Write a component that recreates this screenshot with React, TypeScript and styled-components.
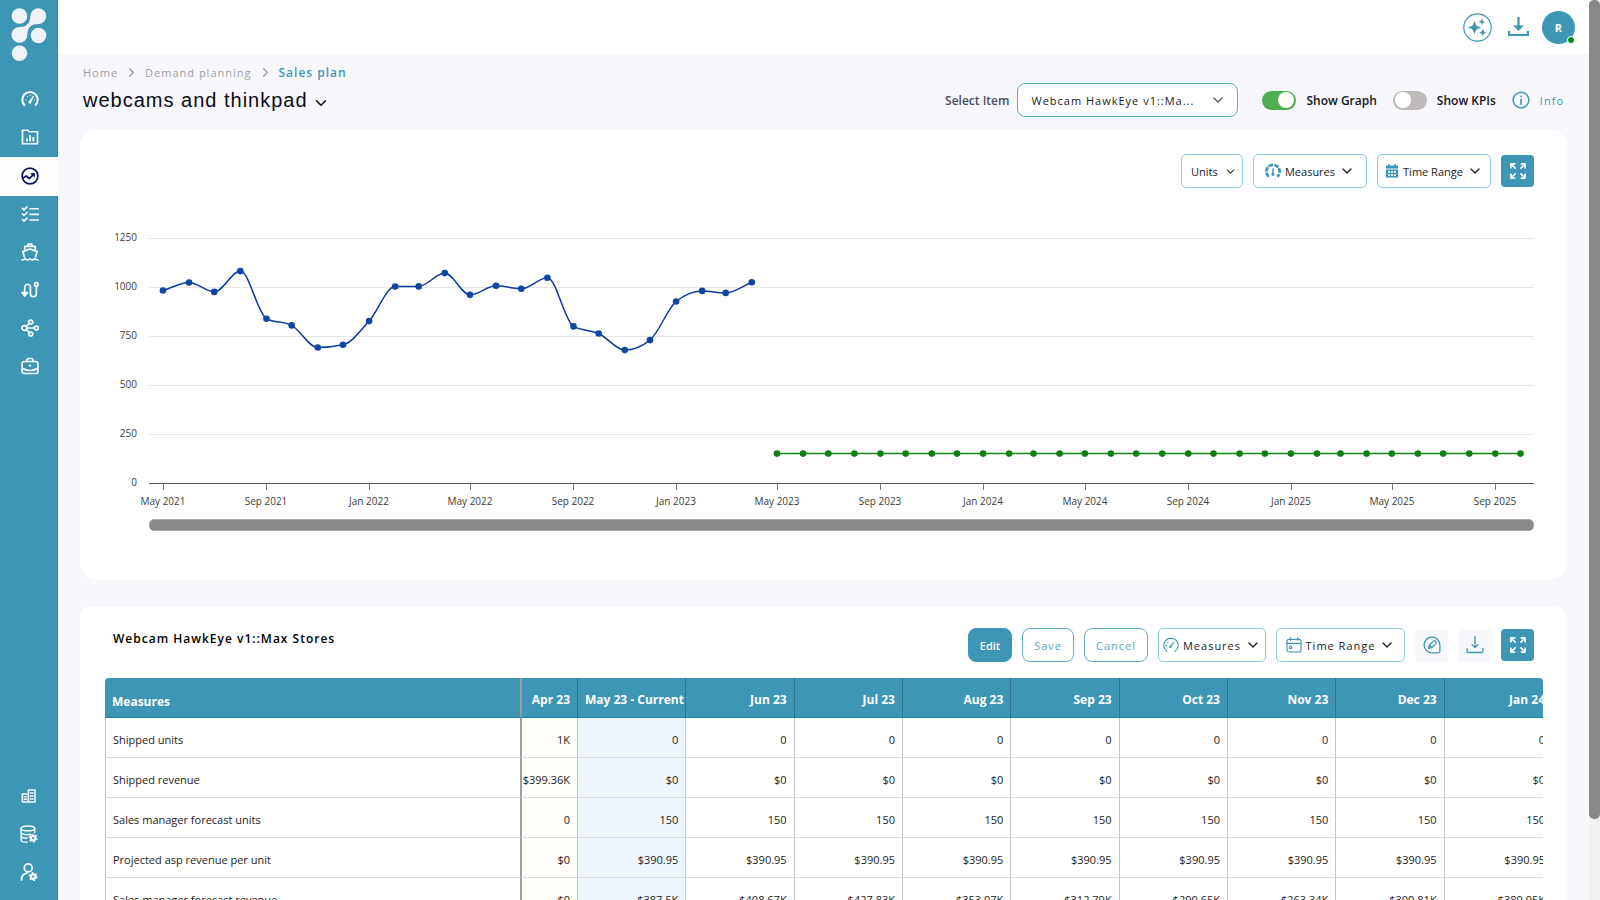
import React from "react";
import styled, { createGlobalStyle, css } from "styled-components";
import { ChevronDown, ChevronRight } from "lucide-react";

const teal = "#3e96b5";
const sans = `"Open Sans", "Noto Sans", sans-serif`;

const GlobalStyle = createGlobalStyle`
  * { box-sizing: border-box; }
  html, body { margin: 0; padding: 0; }
  body { font-family: ${sans}; font-size: 12px; color: #111; background: #f7f7fc; }
  button, input, select { font-family: inherit; }
`;

const Shell = styled.div`
  display: grid;
  grid-template-columns: 58px minmax(0, 1fr) 11px;
  height: 100vh;
  overflow: hidden;
`;

/* ---------- sidebar ---------- */

const Sidebar = styled.nav`
  display: flex;
  flex-direction: column;
  background: ${teal};
  box-shadow: inset -1px 0 #2b88ab;
  color: #f0f6fb;
`;

const Brand = styled.a`
  display: block;
  height: 81px;
  padding: 8px 0 0 11px;
`;

const NavLink = styled.a<{ $active?: boolean }>`
  display: flex;
  align-items: center;
  justify-content: center;
  height: ${(p) => (p.$active ? 39 : 38)}px;
  padding: 0 0 2px 1px;
  color: ${(p) => (p.$active ? "#0b1560" : "#f4f9fc")};
  background: ${(p) => (p.$active ? "#fdfdfe" : "transparent")};
`;

const NavGroup = styled.div<{ $bottom?: boolean }>`
  display: flex;
  flex-direction: column;
  ${(p) => p.$bottom && css`
    margin-top: auto;
    padding: 0 2px 8px 0;
  `}
`;

/* ---------- page ---------- */

const Page = styled.div`
  display: flex;
  flex-direction: column;
  min-width: 0;
  overflow: hidden;
`;

const TopBar = styled.header`
  display: flex;
  align-items: center;
  justify-content: flex-end;
  flex: none;
  gap: 13px;
  height: 54px;
  padding-right: 14px;
  background: #fff;
`;

const TopActions = styled.div`
  display: flex;
  align-items: center;
  gap: 16px;
`;

const BareButton = styled.button`
  display: flex;
  padding: 0;
  border: 0;
  background: none;
  color: ${teal};
`;

const Avatar = styled.button`
  position: relative;
  width: 33px;
  height: 33px;
  padding: 0;
  border: 0;
  border-radius: 50%;
  background: ${teal};
  color: #fff;
  font-size: 11px;
  font-weight: 700;
`;

const OnlineDot = styled.span`
  position: absolute;
  right: 0;
  bottom: 0;
  width: 8px;
  height: 8px;
  border: 1px solid #fff;
  border-radius: 50%;
  background: #0a8a0a;
`;

const Main = styled.main`
  display: flex;
  flex-direction: column;
  padding: 8px 22px 0;
`;

const Crumbs = styled.div`
  display: flex;
  align-items: center;
  gap: 6px;
  height: 20px;
  padding-left: 3px;
  color: #9a9aa2;
`;

const Crumb = styled.a<{ $current?: boolean }>`
  color: ${(p) => (p.$current ? teal : "#a0a0a6")};
  font-size: ${(p) => (p.$current ? 12 : 11)}px;
  font-weight: ${(p) => (p.$current ? 600 : 400)};
  letter-spacing: 1px;
  text-decoration: none;
`;

const TitleRow = styled.div`
  display: flex;
  align-items: center;
  justify-content: space-between;
  height: 34px;
  margin-top: 1px;
  padding: 0 3px;
`;

const TitleButton = styled.button`
  display: flex;
  align-items: center;
  gap: 4px;
  padding: 0;
  border: 0;
  background: none;
  color: #0a0a14;

  svg { margin-top: 5px; }
`;

const Title = styled.h1`
  margin: 0;
  font-family: "Liberation Sans", Arial, sans-serif;
  font-size: 20px;
  font-weight: 400;
  letter-spacing: 1px;
`;

const Controls = styled.div`
  display: flex;
  align-items: center;
  font-size: 12px;
  font-weight: 600;
`;

const FieldLabel = styled.label`
  margin-right: 8px;
  color: #4c4c5c;
`;

const SelectBox = styled.div<{ $wide?: boolean }>`
  display: grid;
  align-items: center;
  width: ${(p) => (p.$wide ? 221 : 62)}px;
  height: 34px;

  > * { grid-area: 1 / 1; }
  > svg { justify-self: end; margin-right: ${(p) => (p.$wide ? 12 : 6)}px; pointer-events: none; }
`;

const Select = styled.select<{ $wide?: boolean }>`
  appearance: none;
  width: 100%;
  height: 34px;
  padding: 0 ${(p) => (p.$wide ? 13 : 9)}px;
  border: 1px solid ${(p) => (p.$wide ? "#5fa9c4" : "#90cbe0")};
  border-radius: ${(p) => (p.$wide ? 8 : 5)}px;
  background: #fff;
  color: #222;
  font-size: 11px;
  letter-spacing: ${(p) => (p.$wide ? 1 : 0)}px;
`;

const Toggle = styled.label`
  display: flex;
  align-items: center;
  gap: 10px;
  margin-right: 16px;
  color: #14141c;
`;

const Switch = styled.input`
  appearance: none;
  display: flex;
  align-items: center;
  width: 34px;
  height: 19px;
  margin: 0;
  padding: 0 2px;
  border-radius: 10px;
  background: #bfbbbb;

  &::before {
    content: "";
    width: 16px;
    height: 16px;
    border-radius: 50%;
    background: #fff;
  }
  &:checked { justify-content: flex-end; background: #4caf50; }
`;

const Toggles = styled.div`
  display: flex;
  align-items: center;
  margin-left: 24px;
`;

const InfoLink = styled.a`
  display: flex;
  align-items: center;
  gap: 10px;
  color: ${teal};
  font-size: 11px;
  font-weight: 400;
  letter-spacing: 1px;
  text-decoration: none;
`;

/* ---------- cards ---------- */

const Card = styled.section<{ $radius: number }>`
  border-radius: ${(p) => p.$radius}px;
  background: #fff;
`;

const ChartCard = styled(Card)`
  margin-top: 12px;
  padding: 25px 24px 49px;
`;

const TableCard = styled(Card)`
  margin-top: 27px;
  padding: 21px 24px 40px 25px;
`;

const Toolbar = styled.div`
  display: flex;
  align-items: center;
  justify-content: flex-end;
  gap: 10px;
  padding-right: 9px;
`;

const TableHead = styled.div`
  display: flex;
  align-items: flex-start;
  justify-content: space-between;
  padding-left: 8px;
  margin-bottom: 16px;
`;

const CardTitle = styled.h2`
  margin: 0;
  font-size: 12px;
  line-height: 22px;
  font-weight: 600;
  letter-spacing: 1px;
  color: #000;
`;

const DropButton = styled.button<{ $w: number; $spaced?: boolean }>`
  display: flex;
  align-items: center;
  justify-content: center;
  gap: 4px;
  width: ${(p) => p.$w}px;
  height: 34px;
  padding: 0;
  border: 1px solid #90cbe0;
  border-radius: 5px;
  background: #fff;
  color: #1c1c24;
  font-size: 11px;
  letter-spacing: ${(p) => (p.$spaced ? 1 : 0)}px;
  white-space: nowrap;

  svg:first-child { color: ${teal}; }
`;

const TextButton = styled.button<{ $filled?: boolean }>`
  height: 34px;
  padding: 0 11px;
  border: 1px solid ${(p) => (p.$filled ? teal : "#62abc6")};
  border-radius: 8px;
  background: ${(p) => (p.$filled ? teal : "#fff")};
  color: ${(p) => (p.$filled ? "#fff" : "#5ba5c0")};
  font-size: 11px;
  font-weight: ${(p) => (p.$filled ? 600 : 400)};
  letter-spacing: ${(p) => (p.$filled ? 0 : 1)}px;
`;

const IconButton = styled.button<{ $filled?: boolean }>`
  display: flex;
  align-items: center;
  justify-content: center;
  width: 33px;
  height: ${(p) => (p.$filled ? 32 : 33)}px;
  padding: 0;
  border: 0;
  border-radius: 4px;
  background: ${(p) => (p.$filled ? teal : "#f7f7fc")};
  color: ${(p) => (p.$filled ? "#fff" : teal)};
`;

/* ---------- chart ---------- */

const ChartSvg = styled.svg`
  display: block;
  width: 100%;
  height: auto;
  margin-top: 37px;
  font-family: ${sans};
  font-size: 10px;
  fill: #3c3c3c;
`;

const ChartScroll = styled.div`
  height: 12px;
  margin: 4px 9px 0 45px;
  border: 1px solid #a8a8a8;
  border-radius: 5px;
  background: #888;
`;

/* ---------- table ---------- */

const TableClip = styled.div`
  border-radius: 4px 4px 0 0;
  overflow: hidden;
`;

const DataTable = styled.table`
  width: calc(100% + 10px);
  table-layout: fixed;
  border-collapse: separate;
  border-spacing: 0;
  font-size: 11px;
`;

const NameCol = styled.col`
  width: 417px;
`;
const PastCol = styled.col`
  width: 56px;
`;

const edge = css<{ $kind?: string }>`
  border-right: ${(p) => (p.$kind === "name" ? "2px solid #9c9c9c" : "1px solid #c4c6c8")};
`;

const HeadCell = styled.th<{ $kind?: string }>`
  height: 40px;
  padding: ${(p) => (p.$kind === "name" ? 7 : 4)}px 7px 0;
  ${edge}
  ${(p) => p.$kind !== "name" && css`border-right-color: #2f7791;`}
  border-bottom: 1px solid #1a83a8;
  background: ${teal};
  color: #fff;
  font-size: 12px;
  font-weight: 700;
  text-align: ${(p) => (p.$kind === "name" ? "left" : "right")};
  white-space: nowrap;
`;

const cellBg: Record<string, string> = { past: "#fffef8", current: "#eef8fc" };

const Cell = styled.td<{ $kind?: string }>`
  height: 40px;
  padding: 3px 7px 0;
  ${(p) => p.$kind === "past" && css`padding-left: 0;`}
  ${edge}
  ${(p) => p.$kind === "name" && css`border-left: 1px solid #c8c8c8;`}
  border-bottom: 1px solid #dcdcdc;
  background: ${(p) => cellBg[p.$kind ?? ""] ?? "#fff"};
  color: #1c1c1c;
  text-align: ${(p) => (p.$kind === "name" ? "left" : "right")};
  white-space: nowrap;
`;

const ScrollTrack = styled.div`
  background: #f1f1f1;
`;

const ScrollThumb = styled.div`
  height: 91%;
  border-radius: 5px;
  background: #888;
`;

/* ---------- icons ---------- */

type IconProps = { size?: number; w?: number; children?: React.ReactNode };
const Line = ({ size = 18, w = 2.3, children }: IconProps) => (
  <svg width={size} height={size} viewBox="0 0 24 24" fill="none" stroke="currentColor" strokeWidth={w} strokeLinecap="round" strokeLinejoin="round" aria-hidden="true">
    {children}
  </svg>
);

const Logo = () => (
  <svg width="36" height="54" viewBox="0 0 36 54" fill="#f0f2fa" aria-hidden="true">
    <circle cx="8.5" cy="8" r="7.8" />
    <circle cx="27.5" cy="27.5" r="7.8" />
    <circle cx="8.5" cy="45.3" r="7.8" />
    <path d="M27.3 0.2a7.9 7.9 0 1 1 0 15.8c-6 .3-10.500 2-11 10.800a7.900 7.900 0 1 1-7.900-7.800c6.500-.2 10.600-2.500 11-11a7.900 7.900 0 0 1 7.900-7.800z" />
  </svg>
);

const GaugeIcon = () => (
  <Line w={2.800}>
    <path d="M4.500 20A10.300 10.300 0 1 1 19.500 20" />
    <path d="M10.500 16.500 16.500 8.500l-4 9z" fill="currentColor" strokeWidth="1.500" />
    <path d="M6.500 13h.1M8.500 8.800h.1M12.500 7h.1M18 13h.1" strokeWidth="1.600" />
  </Line>
);
const FolderChartIcon = () => (
  <Line>
    <path d="M2 21V3h7l2 2h11v16z" strokeLinejoin="miter" />
    <path d="M8 18v-4M12 18V9.500M16.500 18v-6" strokeLinecap="butt" strokeWidth="2.600" />
  </Line>
);
const TrendIcon = () => (
  <Line>
    <circle cx="12" cy="12" r="10.500" />
    <path d="M3 14.500l4-2.500 4 3.500 6-6" />
    <path d="M13.500 8.500h4.500v4.500z" fill="currentColor" strokeWidth="1" />
  </Line>
);
const ChecklistIcon = () => (
  <Line>
    <path d="M2 4.500l2 2L8 2.500M2 12l2 2 4-4M2 19.500l2 2 4-4" />
    <path d="M12 5h11M12 12.500h11M12 20h11" />
  </Line>
);
const ShipIcon = () => (
  <Line>
    <path d="M5 10V4.500h14V10M9.500 4V1.500h5V4" />
    <path d="M4.500 18.500 2.500 11.500 12 8l9.500 3.500L19.500 18.500" />
    <path d="M1.500 22.500c2 0 3-.5 4-1.500 1.500 1 2.500 1.500 3.500 1.500s2-.5 3-1.500c1 1 2 1.500 3 1.500s2-.5 3.500-1.500c1 1 2 1.500 4 1.500" />
  </Line>
);
const RouteIcon = () => (
  <Line>
    <path d="M5 19V7a4 4 0 0 1 7.500 0v10a4 4 0 0 0 8 0V7" />
    <path d="M1.500 15.500 5 20l3.500-4.500z" fill="currentColor" />
    <circle cx="20.500" cy="4.500" r="2.300" />
  </Line>
);
const NetworkIcon = () => (
  <Line>
    <circle cx="4.500" cy="12" r="3.300" />
    <circle cx="13" cy="4" r="2.600" />
    <circle cx="20.500" cy="12" r="2.600" />
    <circle cx="13" cy="20" r="2.600" />
    <path d="M8 12h9.500M7.200 9.800l3.600-3.500M7.200 14.200l3.600 3.500" />
  </Line>
);
const BriefcaseIcon = () => (
  <Line>
    <rect x="1.500" y="6" width="21" height="16" rx="2.500" />
    <path d="M8 6V4a2 2 0 0 1 2-2h4a2 2 0 0 1 2 2v2M2 15.500c6 3 14 3 20 0M11.500 11.500h1" />
  </Line>
);
const BuildingIcon = () => (
  <Line size={16}>
    <path d="M2 21V9h9v12zM11 21V3h10v18z" />
    <path d="M5 13h3M5 17h3M14 7.500h4M14 12h4M14 16.500h4" />
  </Line>
);
const Gear = ({ x, y }: { x: number; y: number }) => (
  <g>
    <circle cx={x} cy={y} r="3" strokeWidth="3" />
    <circle cx={x} cy={y} r="5" strokeWidth="2" strokeDasharray="2.600 2.640" strokeLinecap="butt" />
  </g>
);
const DatabaseIcon = () => (
  <Line w={2}>
    <ellipse cx="10.500" cy="4.500" rx="9" ry="3.200" />
    <path d="M1.500 4.500V20c0 1.800 3.500 3 8 3M19.500 4.500V10M1.500 9.700c0 2 4 3.200 9 3.200 1.500 0 3-.2 4-.5M1.500 14.800c0 1.700 3.500 2.900 8 3" />
    <Gear x={17.500} y={17.500} />
  </Line>
);
const UserIcon = () => (
  <Line>
    <circle cx="11" cy="6.500" r="5.300" />
    <path d="M2 22.500c0-5 3-8.500 8-9.300" />
    <Gear x={17.500} y={18} />
  </Line>
);
const SparkleIcon = () => (
  <svg width="29" height="29" viewBox="0 0 29 29" aria-hidden="true">
    <circle cx="14.500" cy="14.500" r="13.700" fill="none" stroke="currentColor" strokeWidth="1.200" />
    <g fill="currentColor" stroke="currentColor" strokeWidth="0.800" strokeLinejoin="round">
      <path d="M11.500 8.500c1 4.300 2 5.200 6 6-4 1-5 2-6 6-1-4-2-5-6-6 4-.8 5-1.700 6-6z" />
      <path d="M18.800 6.300c.4 1.800.8 2.200 2.500 2.500-1.700.4-2.100.8-2.500 2.500-.4-1.700-.8-2.100-2.500-2.500 1.700-.3 2.100-.7 2.500-2.500z" />
      <path d="M19.800 16.500c.5 2.200 1 2.700 3 3-2 .5-2.500 1-3 3-.5-2-1-2.500-3-3 2-.3 2.500-.8 3-3z" />
    </g>
  </svg>
);
const DownloadIcon = () => (
  <svg width="21" height="21" viewBox="0 0 21 21" fill="none" stroke="currentColor" strokeWidth="2.200" aria-hidden="true">
    <path d="M1.100 14V18h18.800v-4M10.500 0v11" />
    <path d="M5 8.500h11l-5.500 5.500z" fill="currentColor" stroke="none" />
  </svg>
);
const ThinDownloadIcon = () => (
  <Line size={18} w={1.800}>
    <path d="M12 1v14M8 11.500l4 4 4-4M1.500 17v3.500a1.500 1.500 0 0 0 1.500 1.500h18a1.500 1.500 0 0 0 1.500-1.500V17" />
  </Line>
);
const EditCircleIcon = () => (
  <Line size={18} w={1.700}>
    <path d="M12 1.500A10.500 10.500 0 1 0 12 22.500h8.500a2 2 0 0 0 2-2V12A10.500 10.500 0 0 0 12 1.500z" />
    <path d="M7.500 16.500l1-4.500 5.500-5.500c1.500-1.200 4.700 1.500 3.300 3.300L12 15.500zM8.500 12l3.500 3.500" />
  </Line>
);
const ExpandIcon = () => (
  <Line size={20} w={2}>
    <path d="M8.500 8.500 4.500 4.500M3.500 8v-4.500h4.500M15.500 8.500l4-4M16 3.500h4.500v4.500M8.500 15.500l-4 4M3.500 16v4.500h4.500M15.500 15.500l4 4M20.500 16v4.500h-4.500" />
  </Line>
);
const DashIcon = () => (
  <Line size={16} w={4}>
    <path d="M5.500 20.500A10 10 0 1 1 18.500 20.500" strokeDasharray="7 1.500" strokeLinecap="butt" />
    <path d="M12 9v7" strokeWidth="2.200" />
    <circle cx="12" cy="17" r="1.500" strokeWidth="2" />
  </Line>
);
const ThinGaugeIcon = () => (
  <Line size={16} w={1.700}>
    <path d="M6 21.500A10.800 10.800 0 1 1 18 21.500" />
    <path d="M11.500 14 16 8.500M4.500 13h1M7 7.500l.5.5" />
    <circle cx="11" cy="14.500" r="1" />
  </Line>
);
const CalendarGridIcon = () => (
  <svg width="14" height="14" viewBox="0 0 14 14" aria-hidden="true">
    <path d="M1 1.500h12V4.500H1zM3 0h1.500v3H3zM9.500 0H11v3H9.500z" fill="currentColor" />
    <path d="M1 5.500h12V13.500H1z" fill="currentColor" />
    <path d="M3 7h2v1.800H3zM6 7h2v1.800H6zM9 7h2v1.800H9zM3 10.200h2V12H3zM6 10.200h2V12H6zM9 10.200h2V12H9z" fill="#fff" />
  </svg>
);
const CalendarLineIcon = () => (
  <Line size={16} w={1.700}>
    <rect x="1.500" y="3.500" width="21" height="19" rx="3" />
    <path d="M1.500 9.500h21M6.500 1v4M17.500 1v4" />
    <circle cx="7" cy="15.500" r="2" />
  </Line>
);
const InfoIcon = () => (
  <Line size={18} w={2}>
    <circle cx="12" cy="12" r="10.500" />
    <path d="M12 11v6.500M12 7v.2" strokeWidth="2.200" />
  </Line>
);

/* ---------- data ---------- */

const history = [
  982, 1023, 975, 1081, 838, 804, 691, 705, 826, 1002, 1003, 1071, 960, 1006, 991, 1047, 799, 763, 678, 729, 926, 980, 970, 1024,
];
const months = [
  "Jun 23", "Jul 23", "Aug 23", "Sep 23", "Oct 23", "Nov 23", "Dec 23", "Jan 24",
];
const fill = (v: string) => months.map(() => v);
const rows = [
  { name: "Shipped units", cells: ["1K", "0", ...fill("0")] },
  { name: "Shipped revenue", cells: ["$399.36K", "$0", ...fill("$0")] },
  { name: "Sales manager forecast units", cells: ["0", "150", ...fill("150")] },
  { name: "Projected asp revenue per unit", cells: ["$0", "$390.95", ...fill("$390.95")] },
  {
    name: "Sales manager forecast revenue",
    cells: ["$0", "$387.5K", "$408.67K", "$427.83K", "$353.07K", "$312.79K", "$290.65K", "$263.34K", "$300.81K", "$389.95K"],
  },
];

const start = Date.UTC(2021, 4, 1);
const xAt = (i: number) => 59 + ((Date.UTC(2021, 4 + i, 1) - start) / 86400000) * 0.8411;
const yAt = (v: number) => 258 - v * 0.196;

/* Monotone cubic interpolation, so that the curve never overshoots a point. */
const curve = (pts: [number, number][]) => {
  const n = pts.length;
  const slope = (i: number) => (pts[i + 1][1] - pts[i][1]) / (pts[i + 1][0] - pts[i][0]);
  const t = pts.map((_, i) => {
    if (i === 0) return slope(0);
    if (i === n - 1) return slope(n - 2);
    const a = slope(i - 1);
    const b = slope(i);
    if (a * b <= 0) return 0;
    return Math.sign(a) * Math.min(Math.abs(a), Math.abs(b), Math.abs(a + b) / 4) * 2;
  });
  return pts.slice(1).reduce((d, p, k) => {
    const q = pts[k];
    const h = (p[0] - q[0]) / 3;
    return `${d}C${q[0] + h},${q[1] + t[k] * h} ${p[0] - h},${p[1] - t[k + 1] * h} ${p[0]},${p[1]}`;
  }, `M${pts[0][0]},${pts[0][1]}`);
};

const actual = history.map((v, i) => [xAt(i), yAt(v)] as [number, number]);
const forecast = Array.from({ length: 30 }, (_, i) => [xAt(24 + i), yAt(150)] as [number, number]);
const ticks = Array.from({ length: 14 }, (_, i) => ({
  x: Math.round(xAt(i * 4)),
  label: `${["May", "Sep", "Jan"][i % 3]} ${2021 + Math.floor((4 + i * 4) / 12)}`,
}));

const Chart = () => (
  <ChartSvg viewBox="0 0 1439 290" role="img" aria-label="Shipped and forecast units by month">
    {[0, 250, 500, 750, 1000, 1250].map((v) => (
      <g key={v}>
        <rect x="45" y={Math.round(yAt(v))} width="1385" height="1" fill={v ? "#e6e6e6" : "#555"} />
        <text x="33" y={Math.round(yAt(v)) + 3} textAnchor="end">{v}</text>
      </g>
    ))}
    {ticks.map((t) => (
      <g key={t.label}>
        <rect x={t.x} y="258" width="1" height="7" fill="#777" />
        <text x={t.x} y="280" textAnchor="middle">{t.label}</text>
      </g>
    ))}
    <path d={curve(actual)} fill="none" stroke="#0b3a9c" strokeWidth="1.500" />
    {actual.map(([x, y]) => <circle key={x} cx={x} cy={y} r="3.300" fill="#0d47a1" />)}
    <path d={curve(forecast)} fill="none" stroke="#128a12" strokeWidth="1.500" />
    {forecast.map(([x, y]) => <circle key={x} cx={x} cy={y} r="3.300" fill="#0f800f" />)}
  </ChartSvg>
);

const navItems = [
  { label: "Dashboard", icon: <GaugeIcon /> },
  { label: "Reports", icon: <FolderChartIcon /> },
  { label: "Demand planning", icon: <TrendIcon />, active: true },
  { label: "Tasks", icon: <ChecklistIcon /> },
  { label: "Supply", icon: <ShipIcon /> },
  { label: "Routes", icon: <RouteIcon /> },
  { label: "Network", icon: <NetworkIcon /> },
  { label: "Business", icon: <BriefcaseIcon /> },
];
const adminItems = [
  { label: "Organisation", icon: <BuildingIcon /> },
  { label: "Data settings", icon: <DatabaseIcon /> },
  { label: "User settings", icon: <UserIcon /> },
];

export default function App() {
  return (
    <>
      <GlobalStyle />
      <Shell>
        <Sidebar aria-label="Main">
          <Brand href="#" aria-label="Home page"><Logo /></Brand>
          <NavGroup>
            {navItems.map((n) => (
              <NavLink key={n.label} href="#" aria-label={n.label} $active={n.active}>{n.icon}</NavLink>
            ))}
          </NavGroup>
          <NavGroup $bottom>
            {adminItems.map((n) => (
              <NavLink key={n.label} href="#" aria-label={n.label}>{n.icon}</NavLink>
            ))}
          </NavGroup>
        </Sidebar>

        <Page>
          <TopBar>
            <TopActions>
              <BareButton aria-label="Assistant"><SparkleIcon /></BareButton>
              <BareButton aria-label="Downloads"><DownloadIcon /></BareButton>
            </TopActions>
            <Avatar>R<OnlineDot /></Avatar>
          </TopBar>

          <Main>
            <Crumbs>
              <Crumb href="#">Home</Crumb>
              <ChevronRight size={15} />
              <Crumb href="#">Demand planning</Crumb>
              <ChevronRight size={15} />
              <Crumb href="#" $current>Sales plan</Crumb>
            </Crumbs>
            <TitleRow>
              <TitleButton aria-haspopup="listbox">
                <Title>webcams and thinkpad</Title>
                <ChevronDown size={18} />
              </TitleButton>
              <Controls>
                <FieldLabel htmlFor="item">Select Item</FieldLabel>
                <SelectBox $wide>
                  <Select id="item" $wide><option>Webcam HawkEye v1::Ma...</option></Select>
                  <ChevronDown size={16} color="#555" />
                </SelectBox>
                <Toggles>
                  <Toggle><Switch type="checkbox" defaultChecked />Show Graph</Toggle>
                  <Toggle><Switch type="checkbox" />Show KPIs</Toggle>
                </Toggles>
                <InfoLink href="#"><InfoIcon />Info</InfoLink>
              </Controls>
            </TitleRow>

            <ChartCard $radius={18}>
              <Toolbar>
                <SelectBox>
                  <Select aria-label="Units"><option>Units</option></Select>
                  <ChevronDown size={13} color="#333" />
                </SelectBox>
                <DropButton $w={114}><DashIcon />Measures<ChevronDown size={16} /></DropButton>
                <DropButton $w={114}><CalendarGridIcon />Time Range<ChevronDown size={16} /></DropButton>
                <IconButton $filled aria-label="Expand chart"><ExpandIcon /></IconButton>
              </Toolbar>
              <Chart />
              <ChartScroll />
            </ChartCard>

            <TableCard $radius={10}>
              <TableHead>
                <CardTitle>Webcam HawkEye v1::Max Stores</CardTitle>
                <Toolbar>
                  <TextButton $filled>Edit</TextButton>
                  <TextButton>Save</TextButton>
                  <TextButton>Cancel</TextButton>
                  <DropButton $w={108} $spaced><ThinGaugeIcon />Measures<ChevronDown size={16} /></DropButton>
                  <DropButton $w={129} $spaced><CalendarLineIcon />Time Range<ChevronDown size={16} /></DropButton>
                  <IconButton aria-label="Annotate"><EditCircleIcon /></IconButton>
                  <IconButton aria-label="Download"><ThinDownloadIcon /></IconButton>
                  <IconButton $filled aria-label="Expand table"><ExpandIcon /></IconButton>
                </Toolbar>
              </TableHead>
              <TableClip>
                <DataTable>
                  <colgroup>
                    <NameCol />
                    <PastCol />
                    <col span={9} />
                  </colgroup>
                  <thead>
                    <tr>
                      <HeadCell $kind="name">Measures</HeadCell>
                      {["Apr 23", "May 23 - Current", ...months].map((m) => <HeadCell key={m}>{m}</HeadCell>)}
                    </tr>
                  </thead>
                  <tbody>
                    {rows.map((r) => (
                      <tr key={r.name}>
                        <Cell $kind="name">{r.name}</Cell>
                        {r.cells.map((c, i) => (
                          <Cell key={i} $kind={i === 0 ? "past" : i === 1 ? "current" : undefined}>{c}</Cell>
                        ))}
                      </tr>
                    ))}
                  </tbody>
                </DataTable>
              </TableClip>
            </TableCard>
          </Main>
        </Page>

        <ScrollTrack><ScrollThumb /></ScrollTrack>
      </Shell>
    </>
  );
}
